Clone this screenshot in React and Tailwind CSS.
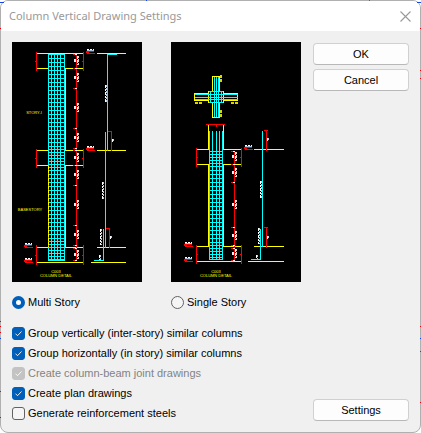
import React, { useState } from 'react';

const YELLOW = '#ffff00';
const CYAN = '#00ffff';
const RED = '#ff0000';

// 1px wide lines, drawn as rects so they stay sharp
function H({ x1, x2, y, c = YELLOW }) {
  return <rect x={x1} y={y} width={x2 - x1 + 1} height="1" fill={c} />;
}

function V({ x, y1, y2, c = YELLOW }) {
  return <rect x={x} y={y1} width="1" height={y2 - y1 + 1} fill={c} />;
}

function Bracket({ x, y1, y2, side }) {
  const mid = Math.round((y1 + y2) / 2);
  return (
    <>
      <V x={x} y1={y1} y2={y2} c={RED} />
      <rect x={x + side} y={mid} width="1" height="1" fill={RED} />
    </>
  );
}

function Dimension({ x, ticks, notes }) {
  return (
    <>
      <V x={x} y1={ticks[0]} y2={ticks[ticks.length - 1]} c={RED} />
      {ticks.map((y) => (
        <g key={y}>
          <H x1={x - 3} x2={x} y={y} c={RED} />
          <rect x={x - 1} y={y} width="2" height="1" fill="#fff" />
        </g>
      ))}
      {notes.map((y) => (
        <g key={y}>
          <rect x={x - 2} y={y + 3} width="2" height="3" fill="#e4ecf4" />
          <path d={`M${x + 1}.5 ${y}v9`} stroke="#fff" strokeDasharray="3 1" />
          <path d={`M${x + 2}.5 ${y}v9`} stroke="#e6d6c4" strokeDasharray="2 1 3 1" />
        </g>
      ))}
    </>
  );
}

function Level({ x, y }) {
  return (
    <>
      <path d={`M${x + 1} ${y - 4}.5h7`} stroke="#fff" strokeDasharray="2 1" />
      <path d={`M${x + 1} ${y - 3}.5h7`} stroke="#a9c4e4" />
      <H x1={x} x2={x + 7} y={y - 2} c={RED} />
      <H x1={x} x2={x + 2} y={y - 1} c={RED} />
      <H x1={x + 1} x2={x + 8} y={y} c={RED} />
    </>
  );
}

function BarNote({ x, y, h }) {
  return (
    <>
      <path d={`M${x}.5 ${y}v${h}`} stroke="#fff" strokeDasharray="3 1 2 1" />
      <path d={`M${x + 1}.5 ${y}v${h}`} stroke="#b9cfe6" strokeDasharray="2 1" />
    </>
  );
}

// stirrups are closer together inside the joints
function Mesh({ cols, y1, y2, joints }) {
  const rows = [];
  let y = y1;
  while (y <= y2) {
    rows.push(y);
    const dense = joints.some(([a, b]) => y >= a && y < b);
    y += dense ? 3 : 4;
  }
  return (
    <>
      {cols.map((x) => <V key={x} x={x} y1={y1} y2={y2} c={CYAN} />)}
      {rows.map((r) => <H key={r} x1={cols[0]} x2={cols[cols.length - 1]} y={r} c={CYAN} />)}
      <H x1={cols[0]} x2={cols[cols.length - 1]} y={y2} c={CYAN} />
    </>
  );
}

function Label({ x, y, children }) {
  return (
    <text
      x={x}
      y={y}
      fill={YELLOW}
      fontSize="4"
      textAnchor="middle"
      fontFamily="'Liberation Sans Narrow', 'Liberation Sans', sans-serif"
    >
      {children}
    </text>
  );
}

function MultiStoryDrawing() {
  return (
    <svg viewBox="0 0 130 240" className="block w-full bg-black" shapeRendering="crispEdges" aria-hidden="true">
      <Mesh cols={[36, 39, 42, 45, 48, 52]} y1={12} y2={218} joints={[[104, 126], [196, 218]]} />
      <H x1={25} x2={70} y={11} />
      {[26, 108, 123, 205].map((y) => (
        <g key={y}>
          <H x1={25} x2={35} y={y} />
          <H x1={53} x2={70} y={y} />
        </g>
      ))}
      <H x1={25} x2={70} y={220} />
      <V x={53} y1={26} y2={108} />
      <V x={53} y1={123} y2={205} />
      <path d="M36.5 124v81" stroke={YELLOW} strokeDasharray="3 1" />
      {[[10, 28], [107, 125], [203, 222]].map(([a, b]) => (
        <g key={a}>
          <Bracket x={24} y1={a} y2={b} side={-1} />
          <Bracket x={71} y1={a} y2={b} side={-1} />
        </g>
      ))}
      <Dimension
        x={64}
        ticks={[12, 26, 46, 86, 106, 108, 123, 143, 183, 203, 206, 218]}
        notes={[14, 31, 61, 91, 111, 128, 158, 188, 208]}
      />
      <Level x={74} y={11} />
      <Level x={74} y={108} />
      <Level x={12} y={205} />
      <Level x={12} y={220} />
      <H x1={85} x2={113} y={11} />
      <H x1={85} x2={113} y={108} />
      <H x1={85} x2={113} y={205} />
      <H x1={79} x2={113} y={220} />
      <V x={95} y1={12} y2={108} c={CYAN} />
      <H x1={95} x2={104} y={12} c={CYAN} />
      <V x={93} y1={90} y2={205} c={CYAN} />
      <V x={91} y1={187} y2={218} c={CYAN} />
      <H x1={82} x2={91} y={218} c={CYAN} />
      <BarNote x={93} y={43} h={17} />
      <BarNote x={90} y={140} h={17} />
      <BarNote x={88} y={187} h={16} />
      <BarNote x={87} y={213} h={5} />
      <V x={99} y1={89} y2={108} c={RED} />
      <H x1={96} x2={99} y={89} c={RED} />
      <BarNote x={100} y={97} h={3} />
      <V x={97} y1={186} y2={205} c={RED} />
      <H x1={94} x2={97} y={186} c={RED} />
      <BarNote x={98} y={194} h={3} />
      <Label x={22} y={72}>STORY-I</Label>
      <Label x={18} y={169}>BASESTORY</Label>
      <Label x={44} y={231}>C003</Label>
      <Label x={44} y={235}>COLUMN DETAIL</Label>
    </svg>
  );
}

function SingleStoryDrawing() {
  return (
    <svg viewBox="0 0 130 240" className="block w-full bg-black" shapeRendering="crispEdges" aria-hidden="true">
      {/* plan section */}
      <path d="M41.5 34.5h7v41h-7zM23.5 51.5h43v7h-43z" fill="none" stroke={YELLOW} />
      <rect x="37" y="49" width="16" height="12" fill="#000" />
      {[39, 43, 45, 47, 50].map((x) => <V key={x} x={x} y1={49} y2={60} c={CYAN} />)}
      {[49, 52, 55, 57, 60].map((y) => <H key={y} x1={37} x2={52} y={y} c={CYAN} />)}
      <V x={37} y1={49} y2={60} />
      <V x={52} y1={49} y2={60} />
      {[43, 45, 47].map((x) => <V key={x} x={x} y1={35} y2={74} c={CYAN} />)}
      {[52, 55, 57].map((y) => <H key={y} x1={24} x2={66} y={y} c={CYAN} />)}
      <path
        d="M24 60.5h8M24 61.5h8M60 60.5h8M60 61.5h8M49.5 33v8M50.5 33v8M49.5 68v7M50.5 68v7"
        stroke="#d8d800"
        strokeDasharray="3 1"
      />

      {/* elevation */}
      <H x1={35} x2={53} y={82} c={RED} />
      <V x={45} y1={83} y2={84} c={RED} />
      {[38, 41, 45, 48, 51].map((x) => <V key={x} x={x} y1={89} y2={109} c={CYAN} />)}
      <Mesh cols={[38, 41, 45, 48, 51]} y1={109} y2={217} joints={[[109, 124], [200, 217]]} />
      <V x={37} y1={83} y2={107} />
      <V x={52} y1={83} y2={107} />
      <V x={37} y1={122} y2={204} />
      <V x={52} y1={122} y2={204} />
      {[107, 122, 204].map((y) => (
        <g key={y}>
          <H x1={26} x2={37} y={y} />
          <H x1={52} x2={69} y={y} />
        </g>
      ))}
      <H x1={26} x2={69} y={219} />
      {[[106, 124], [203, 221]].map(([a, b]) => (
        <g key={a}>
          <Bracket x={25} y1={a} y2={b} side={1} />
          <Bracket x={70} y1={a} y2={b} side={-1} />
        </g>
      ))}
      <Dimension x={63} ticks={[109, 122, 140, 185, 203, 206, 218]} notes={[110, 126, 158, 189, 207]} />
      <Level x={73} y={107} />
      <Level x={13} y={204} />
      <Level x={13} y={219} />
      <H x1={83} x2={112} y={107} />
      <H x1={83} x2={112} y={204} />
      <H x1={77} x2={112} y={219} />
      <V x={91} y1={89} y2={204} c={CYAN} />
      <V x={89} y1={187} y2={217} c={CYAN} />
      <H x1={80} x2={89} y={217} c={CYAN} />
      <V x={95} y1={88} y2={108} c={RED} />
      <H x1={93} x2={96} y={88} c={RED} />
      <V x={95} y1={185} y2={205} c={RED} />
      <H x1={93} x2={96} y={185} c={RED} />
      <BarNote x={96} y={96} h={3} />
      <BarNote x={96} y={194} h={3} />
      <BarNote x={89} y={139} h={17} />
      <BarNote x={87} y={186} h={16} />
      <BarNote x={85} y={213} h={4} />
      <Label x={45} y={231}>C003</Label>
      <Label x={45} y={235}>COLUMN DETAIL</Label>
    </svg>
  );
}

// bits of the CAD drawing that show around the dialog's edge
function CanvasMarks() {
  return (
    <div className="pointer-events-none absolute inset-0" aria-hidden="true">
      <span className="absolute top-0.5 left-0 h-px w-1 bg-blue-700" />
      <span className="absolute top-0.5 right-0 h-px w-1 bg-blue-700" />
      <span className="absolute top-0 left-[146px] size-px bg-blue-700" />
      <span className="absolute top-0 left-[369px] size-px bg-amber-700" />
      <span className="absolute top-7 left-0 size-px bg-red-600" />
      <span className="absolute top-[321px] left-0 size-px bg-red-600" />
      <span className="absolute top-[326px] left-0 size-px bg-red-600" />
      <span className="absolute top-[332px] left-0 size-px bg-red-600" />
      <span className="absolute top-[338px] left-0 size-px bg-blue-700" />
      <span className="absolute top-[391px] left-0 size-px bg-blue-700" />
      <span className="absolute top-[417px] left-0 size-px bg-red-600" />
      <span className="absolute top-7 right-0 size-px bg-red-600" />
      <span className="absolute top-[70px] right-0 size-px bg-red-600" />
      <span className="absolute top-[78px] right-0 size-px bg-red-600" />
      <span className="absolute top-[326px] right-0 size-px bg-red-600" />
      <span className="absolute top-[338px] right-0 size-px bg-blue-700" />
      <span className="absolute top-[351px] right-0 size-px bg-blue-700" />
      <span className="absolute top-[402px] right-0 size-px bg-red-600" />
      <span className="absolute bottom-0 left-[306px] size-px bg-blue-700" />
      <span className="absolute bottom-0 left-[348px] size-px bg-blue-700" />
    </div>
  );
}

function Button({ children }) {
  return (
    <button
      type="button"
      className="h-[22px] w-24 rounded border border-[#d0d0d0] border-b-[#b8b8b8] bg-[#fdfdfd] text-[11px] leading-5"
    >
      {children}
    </button>
  );
}

function Radio({ label, checked, onChange }) {
  return (
    <label className="flex items-center gap-[3px]">
      <input
        type="radio"
        name="story"
        checked={checked}
        onChange={onChange}
        className="size-[13px] appearance-none rounded-full border border-[#626262] bg-[#f5f5f5] checked:border-4 checked:border-[#005fb8] checked:bg-white"
      />
      {label}
    </label>
  );
}

function Check({ label, checked, disabled, onChange }) {
  return (
    <label className={`flex items-center gap-[3px] ${disabled ? 'text-[#838383]' : ''}`}>
      <span className="relative flex">
        <input
          type="checkbox"
          checked={checked}
          disabled={disabled}
          onChange={onChange}
          className="size-[13px] appearance-none rounded-[3px] border border-[#626262] bg-[#f5f5f5] checked:border-[#005fb8] checked:bg-[#005fb8] disabled:border-[#c3c3c3] disabled:bg-[#c3c3c3]"
        />
        {checked && (
          <svg viewBox="0 0 13 13" className="pointer-events-none absolute inset-0" fill="none" stroke="#fff" strokeWidth="0.9">
            <path d="M3.5 6.7l2 2 4-4.2" />
          </svg>
        )}
      </span>
      {label}
    </label>
  );
}

export default function App() {
  const [story, setStory] = useState('multi');
  const [options, setOptions] = useState({ vertical: true, horizontal: true, joint: true, plan: true, steels: false });

  const toggle = (key) => setOptions((prev) => ({ ...prev, [key]: !prev[key] }));

  return (
    <div className="relative flex min-h-screen flex-col bg-white pb-px font-['Liberation_Sans',sans-serif] text-[11px] leading-4 text-black">
      <div className="flex flex-1 flex-col overflow-hidden rounded-lg border border-[#b0b0b0] bg-[#f0f0f0]">
        <header className="flex h-[30px] items-center justify-between bg-white px-2">
          <h1 className="font-['Noto_Sans',sans-serif] text-[11px] text-[#999]">Column Vertical Drawing Settings</h1>
          <button type="button" aria-label="Close" className="p-px">
            <svg viewBox="0 0 11 11" className="size-[11px]" stroke="#999" strokeWidth="1.1">
              <path d="M.5.5l10 10M10.5.5l-10 10" />
            </svg>
          </button>
        </header>

        <main className="flex flex-1 justify-between p-[11px]">
          <div className="flex flex-col">
            <div className="flex gap-[29px]">
              <div className="flex w-[130px] flex-col gap-3">
                <MultiStoryDrawing />
                <Radio label="Multi Story" checked={story === 'multi'} onChange={() => setStory('multi')} />
              </div>
              <div className="flex w-[130px] flex-col gap-3">
                <SingleStoryDrawing />
                <Radio label="Single Story" checked={story === 'single'} onChange={() => setStory('single')} />
              </div>
            </div>
            <div className="mt-[15px] flex flex-col gap-1">
              <Check label="Group vertically (inter-story) similar columns" checked={options.vertical} onChange={() => toggle('vertical')} />
              <Check label="Group horizontally (in story) similar columns" checked={options.horizontal} onChange={() => toggle('horizontal')} />
              <Check label="Create column-beam joint drawings" checked={options.joint} disabled onChange={() => toggle('joint')} />
              <Check label="Create plan drawings" checked={options.plan} onChange={() => toggle('plan')} />
              <Check label="Generate reinforcement steels" checked={options.steels} onChange={() => toggle('steels')} />
            </div>
          </div>

          <div className="flex flex-col justify-between pt-px">
            <div className="flex flex-col gap-1">
              <Button>OK</Button>
              <Button>Cancel</Button>
            </div>
            <Button>Settings</Button>
          </div>
        </main>
      </div>
      <CanvasMarks />
    </div>
  );
}
